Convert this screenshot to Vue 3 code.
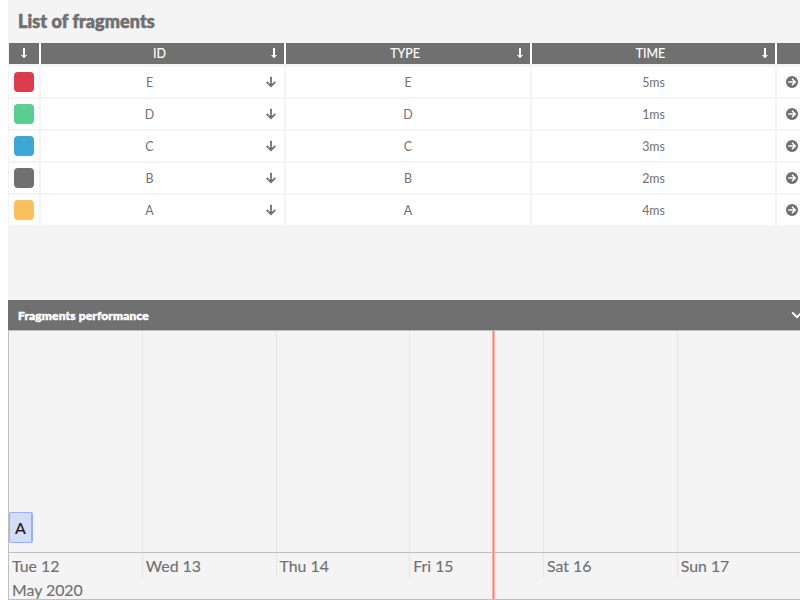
<script setup>
const rows = [
  { id: 'E', time: '5ms', tone: 'red' },
  { id: 'D', time: '1ms', tone: 'green' },
  { id: 'C', time: '3ms', tone: 'blue' },
  { id: 'B', time: '2ms', tone: 'gray' },
  { id: 'A', time: '4ms', tone: 'amber' }
]
const heads = ['', 'ID', 'TYPE', 'TIME']
const days = ['Tue 12', 'Wed 13', 'Thu 14', 'Fri 15', 'Sat 16', 'Sun 17']
</script>

<template>
  <main class="page">
    <section class="list">
      <h1 class="title">List of fragments</h1>
      <div class="row head">
        <div v-for="(h, i) in heads" :key="i" class="th" :class="{ first: i === 0 }">
          <span v-if="h" class="th-label">{{ h }}</span>
          <svg class="sort" width="6" height="12" viewBox="0 0 6 12">
            <path d="M2 1h2v7h2L3 11.2 0 8h2z" fill="#fff" />
          </svg>
        </div>
        <div class="th"></div>
      </div>
      <div class="body">
        <div v-for="r in rows" :key="r.id" class="row">
          <div class="td"><span class="swatch" :class="r.tone"></span></div>
          <div class="td">
            <span class="grow">{{ r.id }}</span>
            <span class="down">
              <svg width="12" height="12" viewBox="0 0 12 12">
                <path d="M6 0.8v9.2M1.7 5.9L6 10.2l4.3-4.3" fill="none" stroke="#707070" stroke-width="1.8" />
              </svg>
            </span>
          </div>
          <div class="td"><span>{{ r.id }}</span></div>
          <div class="td"><span>{{ r.time }}</span></div>
          <div class="td go">
            <svg width="12" height="12" viewBox="0 0 12 12">
              <circle cx="6" cy="6" r="6" fill="#707070" />
              <path d="M2.3 6h6.5M6 2.8L9.2 6 6 9.2" fill="none" stroke="#fff" stroke-width="1.6" />
            </svg>
          </div>
        </div>
      </div>
    </section>
    <section class="perf">
      <header class="bar">
        <span class="bar-title">Fragments performance</span>
        <svg class="chevron" width="12" height="8" viewBox="0 0 12 8">
          <path d="M1.2 1.4L6 6.2l4.8-4.8" fill="none" stroke="#fff" stroke-width="2" />
        </svg>
      </header>
      <div class="timeline">
        <div class="days">
          <div v-for="d in days" :key="d" class="day">
            <div class="plot"></div>
            <div class="label">{{ d }}</div>
          </div>
        </div>
        <div class="month">May 2020</div>
        <div class="item">A</div>
        <div class="now"></div>
      </div>
    </section>
  </main>
</template>

<style>
body {
  background: #fff;
  overflow: hidden;
}
</style>

<style scoped>
.page {
  box-sizing: border-box;
  width: 800px;
  height: 600px;
  padding-left: 8px;
  overflow: hidden;
  font-family: Lato, sans-serif;
  color: #707070;
}
.list {
  height: 300px;
  background: #f4f4f4;
}
.title {
  margin: 0;
  height: 43px;
  padding-left: 10px;
  font-size: 18px;
  font-weight: 900;
  line-height: 42px;
  letter-spacing: 0.09px;
  -webkit-text-stroke: 0.6px #707070;
}
.row {
  display: grid;
  grid-template-columns: 30px 243px 244px 243px 48px;
  column-gap: 2px;
  padding-left: 1px;
}
.head {
  height: 21px;
  background: linear-gradient(to right, #f4f4f4 1px, #fff 1px);
}
.th {
  display: flex;
  align-items: center;
  background: #707070;
  color: #fff;
  font-size: 12.4px;
  line-height: 21px;
  padding-right: 7px;
}
.first {
  justify-content: center;
  padding-right: 0;
}
.th-label {
  flex: 1;
  text-align: center;
  padding-left: 7px;
  padding-top: 1px;
  line-height: 20px;
  -webkit-text-stroke: 0.15px #fff;
}
.sort {
  margin-bottom: 1px;
}
.body {
  display: grid;
  row-gap: 2px;
  padding-top: 3px;
}
.td {
  display: flex;
  align-items: center;
  justify-content: center;
  height: 30px;
  background: #fff;
  font-size: 12.4px;
}
.td > span:not(.swatch):not(.down) {
  line-height: 16px;
  padding-top: 1px;
}
.grow {
  flex: 1;
  text-align: center;
}
.down {
  width: 26px;
  display: flex;
  justify-content: center;
}
.td.go {
  justify-content: flex-start;
  padding-left: 9px;
}
.swatch {
  width: 20px;
  height: 20px;
  border-radius: 4px;
}
.red { background: #dc3c4b; }
.green { background: #5acd90; }
.blue { background: #3fa7d6; }
.gray { background: #707070; }
.amber { background: #fac05e; }
.bar {
  display: flex;
  align-items: center;
  height: 30px;
  padding-left: 10px;
  background: #707070;
  color: #fff;
  font-size: 12px;
  font-weight: 900;
}
.bar-title {
  letter-spacing: 0.14px;
  -webkit-text-stroke: 0.5px #fff;
}
.chevron {
  flex: none;
  margin-left: auto;
  margin-right: -3px;
}
.timeline {
  position: relative;
  box-sizing: border-box;
  width: 810px;
  height: 270px;
  background: #f4f4f4;
  border: 1px solid #bfbfbf;
}
.days {
  display: flex;
}
.day {
  flex: none;
  box-sizing: border-box;
  width: 133.75px;
  border-right: 1px solid #e5e5e5;
}
.plot {
  height: 221px;
  border-bottom: 1px solid #bfbfbf;
  margin-right: -1px;
}
.label,
.month {
  height: 24px;
  padding-left: 3px;
  font-size: 15.85px;
  line-height: 25px;
  -webkit-text-stroke: 0.15px #707070;
}
.item {
  position: absolute;
  left: 0;
  top: 181px;
  box-sizing: border-box;
  width: 24px;
  height: 31px;
  border: 1px solid #97b0f8;
  border-right-width: 2px;
  border-radius: 2px;
  background: #d5ddf6;
  color: #1a1a1a;
  font-size: 16px;
  line-height: 29px;
  text-align: center;
  -webkit-text-stroke: 0.2px #1a1a1a;
}
.now {
  position: absolute;
  left: 483px;
  top: 0;
  box-sizing: border-box;
  width: 3px;
  height: 268px;
  background: #ff7f6e;
  border: solid #fbb5ab;
  border-width: 0 1px;
}
</style>
